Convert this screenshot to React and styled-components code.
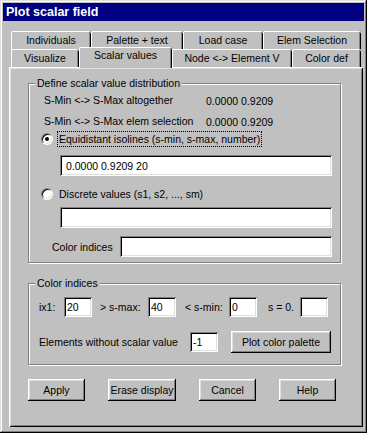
import React from 'react';
import styled, { createGlobalStyle } from 'styled-components';

const GlobalStyle = createGlobalStyle`
  html, body {
    margin: 0;
    padding: 0;
    background: #c0c0c0;
  }
  body {
    font-family: "Liberation Sans", Arial, sans-serif;
    font-size: 10.5px;
    color: #000;
  }
  * { box-sizing: border-box; }
`;

const raised = `
  box-shadow:
    inset -1px -1px #000,
    inset 1px 1px #fff,
    inset -2px -2px #808080,
    inset 2px 2px #dfdfdf;
`;

const sunken = `
  box-shadow:
    inset 1px 1px #808080,
    inset -1px -1px #fff,
    inset 2px 2px #000,
    inset -2px -2px #dfdfdf;
`;

const Window = styled.div`
  width: 367px;
  height: 433px;
  padding: 3px;
  background: #c0c0c0;
  display: flex;
  flex-direction: column;
  box-shadow:
    inset -1px -1px #000,
    inset 1px 1px #dfdfdf,
    inset -2px -2px #808080,
    inset 2px 2px #fff;
`;

const TitleBar = styled.div`
  height: 18px;
  background: #000080;
  color: #fff;
  font-weight: bold;
  font-size: 12.5px;
  display: flex;
  align-items: center;
  padding-left: 3px;
`;

const Body = styled.div`
  flex: 1;
  display: flex;
  flex-direction: column;
  padding: 10px 1px 3px 6px;
`;

const TabStrip = styled.div`
  margin: 0 2px;
  display: flex;
  flex-direction: column;
`;

const TabRow = styled.div`
  display: flex;
  height: 18px;
`;

const Tab = styled.div`
  width: ${p => p.$w}px;
  height: ${p => (p.$active ? 21 : 18)}px;
  margin-top: ${p => (p.$active ? -2 : 0)}px;
  margin-bottom: ${p => (p.$active ? -1 : 0)}px;
  position: relative;
  z-index: ${p => (p.$active ? 2 : 1)};
  background: #c0c0c0;
  border-radius: 2px 2px 0 0;
  display: flex;
  justify-content: center;
  padding-top: ${p => (p.$active ? 2 : 3)}px;
  white-space: nowrap;
  box-shadow:
    inset 1px 0 #fff,
    inset 0 1px #fff,
    inset -1px 0 #000,
    inset -2px 0 #808080;
`;

const Panel = styled.div`
  flex: 1;
  display: flex;
  flex-direction: column;
  padding: 16px 22px 0 19px;
  box-shadow:
    inset 1px 1px #fff,
    inset -1px -1px #000,
    inset 2px 2px #dfdfdf,
    inset -2px -2px #808080;
`;

const GroupBox = styled.div`
  position: relative;
  border: 1px solid #808080;
  box-shadow: inset 1px 1px #fff, 1px 1px #fff;
  margin-top: ${p => p.$mt || 0}px;
  padding: ${p => p.$pad};
  display: flex;
  flex-direction: column;
`;

const Caption = styled.span`
  position: absolute;
  top: -7px;
  left: 6px;
  padding: 0 2px;
  line-height: 13px;
  background: #c0c0c0;
`;

const InfoRow = styled.div`
  display: flex;
  align-items: center;
  height: 20px;
  padding-left: 3px;
  margin-top: ${p => p.$mt || 0}px;
`;

const InfoLabel = styled.span`
  width: 162px;
`;

const InfoValue = styled.span`
  padding-top: 2px;
`;

const RadioRow = styled.div`
  display: flex;
  align-items: center;
  height: 16px;
  margin-top: ${p => p.$mt || 0}px;
`;

const Radio = styled.span`
  position: relative;
  width: 12px;
  height: 12px;
  flex: none;
  border-radius: 50%;
  background: #fff;
  border: 1px solid;
  border-color: #808080 #fff #fff #808080;
  box-shadow: inset 1px 1px #000, inset -1px -1px #dfdfdf;

  &::after {
    content: '';
    display: ${p => (p.$checked ? 'block' : 'none')};
    position: absolute;
    left: 3px;
    top: 3px;
    width: 4px;
    height: 4px;
    border-radius: 50%;
    background: #000;
  }
`;

const RadioLabel = styled.span`
  margin-left: 4px;
  padding: 1px;
  line-height: 12px;
  border: 1px dotted ${p => (p.$focus ? '#000' : 'transparent')};
`;

const Field = styled.input`
  height: ${p => p.$h || 21}px;
  width: ${p => (p.$w ? `${p.$w}px` : 'auto')};
  flex: ${p => (p.$grow ? '1 1 auto' : 'none')};
  min-width: 0;
  margin-top: ${p => p.$mt || 0}px;
  margin-left: ${p => p.$ml || 0}px;
  padding: 0 0 0 ${p => p.$pad || 6}px;
  border: none;
  outline: none;
  background: #fff;
  font-family: inherit;
  font-size: 10.5px;
  color: #000;
  ${sunken}
`;

const FieldRow = styled.div`
  display: flex;
  align-items: center;
  height: 21px;
  margin-top: ${p => p.$mt || 0}px;
`;

const Label = styled.span`
  width: ${p => p.$w}px;
  padding-left: ${p => p.$pl || 0}px;
  flex: none;
  white-space: nowrap;
`;

const IndexRow = styled.div`
  display: flex;
  align-items: center;
  height: ${p => p.$h}px;
  margin-top: ${p => p.$mt || 0}px;
`;

const Button = styled.button`
  width: ${p => p.$w}px;
  height: 22px;
  margin-left: ${p => p.$ml || 0}px;
  flex: none;
  border: none;
  padding: 0;
  background: #c0c0c0;
  font-family: inherit;
  font-size: 10.5px;
  color: #000;
  ${raised}
`;

const ButtonRow = styled.div`
  display: flex;
  gap: 23px;
  margin-top: 14px;
`;

const topTabs = [
  { label: 'Individuals', w: 80 },
  { label: 'Palette + text', w: 92 },
  { label: 'Load case', w: 80 },
  { label: 'Elem Selection', w: 98 },
];

const frontTabs = [
  { label: 'Visualize', w: 68 },
  { label: 'Scalar values', w: 93, active: true },
  { label: 'Node <-> Element V', w: 120 },
  { label: 'Color def', w: 69 },
];

export default function App() {
  return (
    <>
      <GlobalStyle />
      <Window>
        <TitleBar>Plot scalar field</TitleBar>
        <Body>
          <TabStrip>
            <TabRow>
              {topTabs.map(t => (
                <Tab key={t.label} $w={t.w}>{t.label}</Tab>
              ))}
            </TabRow>
            <TabRow>
              {frontTabs.map(t => (
                <Tab key={t.label} $w={t.w} $active={t.active}>{t.label}</Tab>
              ))}
            </TabRow>
          </TabStrip>
          <Panel>
            <GroupBox $pad="6px 8px 5px 12px">
              <Caption>Define scalar value distribution</Caption>
              <InfoRow>
                <InfoLabel>S-Min &lt;-&gt; S-Max altogether</InfoLabel>
                <InfoValue>0.0000 0.9209</InfoValue>
              </InfoRow>
              <InfoRow $mt={1}>
                <InfoLabel>S-Min &lt;-&gt; S-Max elem selection</InfoLabel>
                <InfoValue>0.0000 0.9209</InfoValue>
              </InfoRow>
              <RadioRow>
                <Radio $checked />
                <RadioLabel $focus>Equidistant isolines (s-min, s-max, number)</RadioLabel>
              </RadioRow>
              <Field $mt={8} $ml={19} readOnly value="0.0000 0.9209 20" />
              <RadioRow $mt={10}>
                <Radio />
                <RadioLabel>Discrete values (s1, s2, ..., sm)</RadioLabel>
              </RadioRow>
              <Field $mt={5} $ml={19} readOnly value="" />
              <FieldRow $mt={8}>
                <Label $w={79} $pl={11}>Color indices</Label>
                <Field $grow readOnly value="" />
              </FieldRow>
            </GroupBox>

            <GroupBox $mt={20} $pad="13px 8px 11px 10px">
              <Caption>Color indices</Caption>
              <IndexRow $h={20}>
                <Label $w={25}>ix1:</Label>
                <Field $w={28} $h={20} $pad={3} readOnly value="20" />
                <Label $w={56} $pl={8}>&gt; s-max:</Label>
                <Field $w={28} $h={20} $pad={3} readOnly value="40" />
                <Label $w={53} $pl={9}>&lt; s-min:</Label>
                <Field $w={28} $h={20} $pad={3} readOnly value="0" />
                <Label $w={43} $pl={11}>s = 0.</Label>
                <Field $w={28} $h={20} $pad={3} readOnly value="" />
              </IndexRow>
              <IndexRow $h={22} $mt={14}>
                <Label $w={151}>Elements without scalar value</Label>
                <Field $w={28} $h={20} $pad={3} readOnly value="-1" />
                <Button $w={100} $ml={13}>Plot color palette</Button>
              </IndexRow>
            </GroupBox>

            <ButtonRow>
              <Button $w={57}>Apply</Button>
              <Button $w={68}>Erase display</Button>
              <Button $w={57}>Cancel</Button>
              <Button $w={57}>Help</Button>
            </ButtonRow>
          </Panel>
        </Body>
      </Window>
    </>
  );
}
